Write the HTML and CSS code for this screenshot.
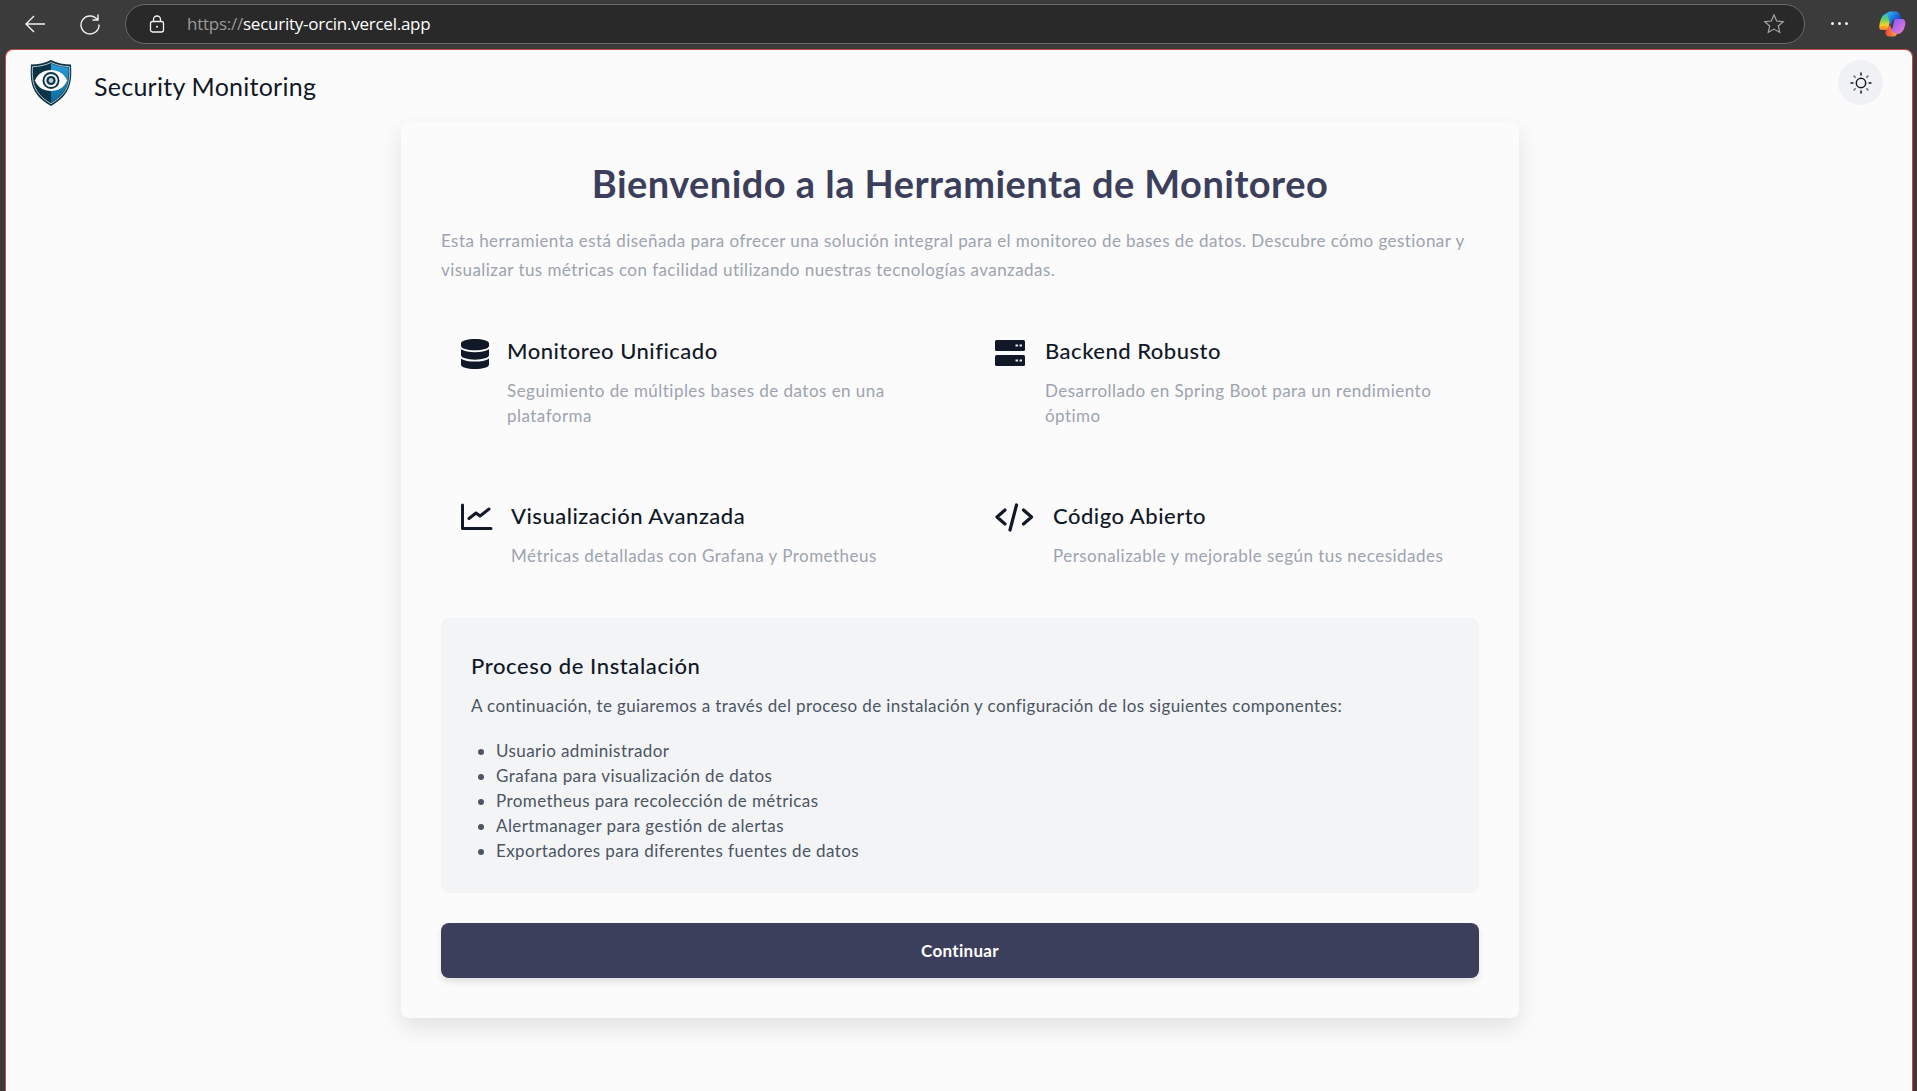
FILE: index.html
```html
<!DOCTYPE html>
<html lang="es">
<head>
    <meta charset="UTF-8">
    <meta name="viewport" content="width=device-width, initial-scale=1.0">
    <title>Security Monitoring</title>
    <link rel="stylesheet" href="styles.css">
</head>
<body>
    <!-- Browser toolbar -->
    <div class="toolbar">
        <svg class="tool-icon back" viewBox="0 0 24 24"><path d="M22 12H3M11 4l-8 8 8 8"/></svg>
        <svg class="tool-icon reload" viewBox="0 0 24 24"><path d="M19.500 8A9 9 0 1 0 21 12.500M20 2.500V8h-5.500"/></svg>
        <div class="url-bar">
            <svg class="lock" viewBox="0 0 16 18"><rect x="1.500" y="6.500" width="13" height="10.500" rx="2"/><path d="M4.500 6.500V4.500a3.500 3.500 0 0 1 7 0v2"/><circle class="dot" cx="8" cy="11.700" r="1"/></svg>
            <span class="url"><span class="scheme">https://</span>security-orcin.vercel.app</span>
            <svg class="star" viewBox="0 0 24 24"><path d="M12 3l2.700 6 6.500.7-4.900 4.300 1.400 6.400-5.700-3.300-5.700 3.300 1.400-6.400-4.900-4.300 6.500-.7z"/></svg>
        </div>
        <div class="more"><i></i><i></i><i></i></div>
        <svg class="copilot" viewBox="0 0 28 26">
            <defs>
                <linearGradient id="cpA" x1="0" y1="0" x2="1" y2="1"><stop offset="0" stop-color="#35c1f1"/><stop offset=".55" stop-color="#1b5fd8"/><stop offset="1" stop-color="#2b2f9e"/></linearGradient>
                <linearGradient id="cpB" x1="0" y1="0" x2="0" y2="1"><stop offset="0" stop-color="#25b4e8"/><stop offset=".35" stop-color="#5fcf6a"/><stop offset=".7" stop-color="#f3cf2e"/><stop offset="1" stop-color="#f07a2c"/></linearGradient>
                <linearGradient id="cpC" x1="0" y1="0" x2="1" y2="1"><stop offset="0" stop-color="#7f5cf0"/><stop offset=".6" stop-color="#c86bea"/><stop offset="1" stop-color="#f58ab0"/></linearGradient>
                <linearGradient id="cpD" x1="0" y1="0" x2="1" y2="0"><stop offset="0" stop-color="#ee4a3a"/><stop offset="1" stop-color="#f9a04a"/></linearGradient>
            </defs>
            <path fill="url(#cpC)" d="M17 8h7c2.500 0 3.800 2 3.300 5-.8 5.500-3.300 9.500-7.300 10l-7-1 2.500-9c.4-2.500 .8-5 1.500-5z"/>
            <path fill="url(#cpD)" d="M8 17l4-3 2 5c.8 2 2 3 5 3.500-.5 2-1.500 3-3.500 3h-4.500c-2 0-3-1.500-3.500-3.500z"/>
            <path fill="url(#cpB)" d="M2 11C3 6 5.500 3 9 2l5 1-3.500 13c-.5 2-1.500 3-3.500 3H3.500C1 19 .8 16 2 11z"/>
            <path fill="url(#cpA)" d="M9 2c1-.8 2.500-1.500 4-1.500h5c2 0 3.500 1.500 4.500 5l.7 2.500H18c-2 0-3 .8-3.500 2.500L13 15 10 6c-.3-1.500-.5-3-1-4z"/>
        </svg>
    </div>

    <div class="page">
        <header class="header">
            <div class="brand">
                <svg class="logo" viewBox="0 0 42 46">
                    <defs>
                        <linearGradient id="shieldBlue" x1="0" y1="0" x2="0" y2="1"><stop offset="0" stop-color="#2a9bd8"/><stop offset="1" stop-color="#0d6a9a"/></linearGradient>
                    </defs>
                    <path fill="#0d3347" d="M21 0c6 3 13 4.500 20 4.500 1 16 .5 30-20 41.500C.5 34.500 0 20.500 1 4.500 8 4.500 15 3 21 0z"/>
                    <path fill="url(#shieldBlue)" d="M21 3.500c5.500 2.500 11.500 3.800 17.500 4 .7 14-.5 25.500-17.500 35.500z"/>
                    <path fill="none" stroke="#e9f2f6" stroke-width="1" d="M21 2.500c5.800 2.800 12 4 18.500 4.200.8 14.800-.6 26.500-18.500 37-17.900-10.500-19.300-22.200-18.500-37C9 6.500 15.200 5.300 21 2.500z" opacity=".75"/>
                    <path fill="#fff" d="M5 20.500C10 6.500 32 6.500 37 20.500 32 34.500 10 34.500 5 20.500z"/>
                    <circle cx="21" cy="20.500" r="8.500" fill="#0d3347"/>
                    <circle cx="21" cy="20.500" r="6.600" fill="#eef4f7"/>
                    <circle cx="21" cy="20.500" r="4.600" fill="#0d3347"/>
                    <circle cx="21" cy="20.500" r="2.400" fill="#b9ccd6"/>
                </svg>
                <span class="brand-name">Security Monitoring</span>
            </div>
            <button class="theme-btn" aria-label="Tema">
                <svg viewBox="0 0 24 24"><circle cx="12" cy="12" r="4.700"/><path d="M12 1.500v3M12 19.500v3M1.500 12h3M19.500 12h3"/><path class="rays" d="M4.600 4.600l2.100 2.100M17.300 17.300l2.100 2.100M4.600 19.400l2.100-2.100M17.300 6.700l2.100-2.100"/></svg>
            </button>
        </header>

        <main class="card">
            <h1>Bienvenido a la Herramienta de Monitoreo</h1>
            <p class="intro">Esta herramienta está diseñada para ofrecer una solución integral para el monitoreo de bases de datos. Descubre cómo gestionar y visualizar tus métricas con facilidad utilizando nuestras tecnologías avanzadas.</p>

            <div class="features">
                <div class="feature">
                    <svg class="feature-icon icon-db" viewBox="0 0 448 512" preserveAspectRatio="none"><path d="M448 73.100v45.700C448 159.100 347.700 192 224 192S0 159.100 0 118.900V73.100C0 32.900 100.300 0 224 0s224 32.900 224 73.100zM448 176v102.900C448 319.100 347.700 352 224 352S0 319.100 0 278.900V176c48.100 33.100 136.200 48.600 224 48.600S399.900 209.100 448 176zm0 160v102.900C448 479.100 347.700 512 224 512S0 479.100 0 438.900V336c48.100 33.100 136.200 48.600 224 48.600S399.900 369.100 448 336z"/></svg>
                    <div>
                        <h3>Monitoreo Unificado</h3>
                        <p>Seguimiento de múltiples bases de datos en una plataforma</p>
                    </div>
                </div>
                <div class="feature">
                    <svg class="feature-icon icon-server" viewBox="0 0 32 32"><rect x="0" y="4" width="30" height="11" rx="1.500"/><rect x="0" y="19" width="30" height="11" rx="1.500"/><path class="led" d="M20.500 8.500h2.500v2h-2.500zM24.500 8.500h2.500v2h-2.500zM20.500 23.500h2.500v2h-2.500zM24.500 23.500h2.500v2h-2.500z"/></svg>
                    <div>
                        <h3>Backend Robusto</h3>
                        <p>Desarrollado en Spring Boot para un rendimiento óptimo</p>
                    </div>
                </div>
                <div class="feature">
                    <svg class="feature-icon icon-line" viewBox="0 0 32 32"><path d="M1.500 4v23.500H30"/><path d="M8 17.500l7-5.500 4 3 9-7"/></svg>
                    <div>
                        <h3>Visualización Avanzada</h3>
                        <p>Métricas detalladas con Grafana y Prometheus</p>
                    </div>
                </div>
                <div class="feature">
                    <svg class="feature-icon icon-line icon-code" viewBox="0 0 40 32"><path d="M10 9l-8 7 8 7M28.500 9l8 7-8 7M21.500 4l-6.500 25"/></svg>
                    <div>
                        <h3>Código Abierto</h3>
                        <p>Personalizable y mejorable según tus necesidades</p>
                    </div>
                </div>
            </div>

            <section class="install">
                <h3>Proceso de Instalación</h3>
                <p>A continuación, te guiaremos a través del proceso de instalación y configuración de los siguientes componentes:</p>
                <ul>
                    <li>Usuario administrador</li>
                    <li>Grafana para visualización de datos</li>
                    <li>Prometheus para recolección de métricas</li>
                    <li>Alertmanager para gestión de alertas</li>
                    <li>Exportadores para diferentes fuentes de datos</li>
                </ul>
            </section>

            <button class="continue">Continuar</button>
        </main>
    </div>
</body>
</html>
```

FILE: styles.css
```css
html, body {
    height: 100%;
}
body {
    margin: 0;
    display: flex;
    flex-direction: column;
    overflow: hidden;
    background-color: #3b3b3b;
    font-family: "Lato", "Noto Sans", sans-serif;
    color: #111827;
}

/* Browser toolbar */
.toolbar {
    height: 49px;
    flex: none;
    display: flex;
    align-items: center;
    padding: 0 9px 2px 23px;
    box-sizing: border-box;
}
.tool-icon {
    width: 24px;
    height: 24px;
    fill: none;
    stroke: #f2f2f2;
    stroke-width: 1.400;
    flex: none;
}
.reload {
    margin-left: 31px;
}
.url-bar {
    flex: none;
    width: 1680px;
    height: 40px;
    margin-left: 23px;
    box-sizing: border-box;
    display: flex;
    align-items: center;
    padding: 0 18px 0 23px;
    border: 1px solid #6a6a6a;
    border-radius: 20px;
    background-color: #292929;
}
.lock {
    width: 16px;
    height: 18px;
    fill: none;
    stroke: #f2f2f2;
    stroke-width: 1.300;
}
.lock .dot {
    fill: #f2f2f2;
    stroke: none;
}
.url {
    margin-left: 22px;
    font-family: "Open Sans", sans-serif;
    font-size: 17px;
    color: #fff;
    letter-spacing: -0.25px;
    flex: 1;
}
.scheme {
    color: #9a9a9a;
}
.star {
    width: 24px;
    height: 24px;
    fill: none;
    stroke: #a8a8a8;
    stroke-width: 1.200;
}
.more {
    display: flex;
    gap: 4px;
    margin-left: 26px;
}
.more i {
    width: 3px;
    height: 3px;
    border-radius: 50%;
    background-color: #f2f2f2;
}
.copilot {
    width: 28px;
    height: 26px;
    margin-left: 30px;
    flex: none;
}

/* Page */
.page {
    flex: 1;
    margin: 0 4px 0 5px;
    padding-left: 2px;
    border: 1px solid #c24a4a;
    border-bottom: 0;
    border-radius: 8px 8px 0 0;
    background-color: #fbfbfb;
    overflow: hidden;
}
.header {
    display: flex;
    align-items: center;
    justify-content: space-between;
    height: 71px;
    margin-left: -2px;
    padding: 0 29px 0 24px;
    box-sizing: border-box;
}
.brand {
    display: flex;
    align-items: center;
    gap: 22px;
}
.logo {
    width: 42px;
    height: 46px;
    margin-top: -6px;
}
.brand-name {
    font-size: 25px;
    letter-spacing: 0.25px;
}
.theme-btn {
    width: 45px;
    height: 45px;
    margin-top: -6px;
    padding: 0;
    display: flex;
    align-items: center;
    justify-content: center;
    border: 0;
    border-radius: 50%;
    background-color: #f0f1f5;
}
.theme-btn svg {
    width: 24px;
    height: 24px;
    fill: none;
    stroke: #111827;
    stroke-width: 1.500;
}
.theme-btn .rays {
    stroke: #6b7280;
}

/* Card */
.card {
    width: 1118px;
    margin: 0 auto;
    padding: 40px;
    box-sizing: border-box;
    border-radius: 8px;
    background-color: #fbfbfb;
    box-shadow: 0 10px 25px rgba(0, 0, 0, 0.1);
}
h1 {
    margin: 0 0 20px;
    font-size: 38px;
    line-height: 45px;
    font-weight: 700;
    letter-spacing: 0.45px;
    text-align: center;
    color: #3c3f5c;
}
.intro {
    margin: 0 0 28px;
    font-size: 17px;
    line-height: 29.250px;
    letter-spacing: 0.44px;
    color: #9ca3af;
}
.features {
    display: grid;
    grid-template-columns: 1fr 1fr;
    gap: 30px;
    margin-bottom: 5px;
}
.feature {
    display: flex;
    gap: 18px;
    padding: 20px;
}
.feature-icon {
    flex: none;
    width: 32px;
    height: 32px;
    margin-top: 3px;
    fill: #111827;
}
.icon-db {
    width: 28px;
    height: 30px;
    margin-top: 6px;
}
.icon-line {
    fill: none;
    stroke: #111827;
    stroke-width: 3;
    stroke-linecap: round;
    stroke-linejoin: round;
}
.icon-code {
    width: 40px;
    stroke-width: 3.200;
}
.icon-server .led {
    fill: #e5e7eb;
}
h3 {
    margin: 0 0 10px;
    font-size: 22px;
    line-height: 35px;
    font-weight: 500;
    letter-spacing: 0.5px;
    color: #111827;
}
.feature p {
    margin: 0;
    font-size: 17px;
    line-height: 25px;
    letter-spacing: 0.47px;
    color: #9ca3af;
}
.install {
    margin-top: 30px;
    padding: 30px;
    border-radius: 8px;
    background-color: #f3f4f6;
}
.install h3 {
    letter-spacing: 0.6px;
}
.install p {
    margin: 0 0 20px;
    font-size: 17px;
    line-height: 25px;
    letter-spacing: 0.38px;
    color: #4b5563;
}
.install ul {
    margin: 0;
    padding-left: 25px;
    font-size: 17px;
    line-height: 25px;
    letter-spacing: 0.42px;
    color: #4b5563;
}
.continue {
    display: block;
    width: 100%;
    height: 55px;
    margin-top: 30px;
    border: 0;
    border-radius: 8px;
    background-color: #3c3f5c;
    color: #fff;
    font-family: inherit;
    font-size: 17px;
    font-weight: 700;
    letter-spacing: 0.3px;
    box-shadow: 0 4px 6px rgba(0, 0, 0, 0.1);
}
```
